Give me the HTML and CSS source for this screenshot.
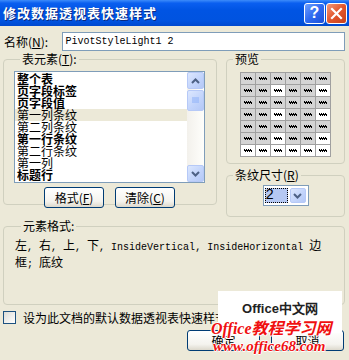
FILE: index.html
```html
<!DOCTYPE html>
<html lang="zh-CN">
<head>
    <meta charset="UTF-8">
    <title>修改数据透视表快速样式</title>
    <link rel="stylesheet" href="styles.css">
</head>
<body>
    <div class="titlebar">
        <span class="title">修改数据透视表快速样式</span>
        <div class="tbtns">
            <span class="tbtn help">?</span>
            <span class="tbtn close">
                <svg width="13" height="13" viewBox="0 0 13 13"><path d="M2 2L11 11M11 2L2 11" stroke="#fff" stroke-width="2.2" stroke-linecap="square"/></svg>
            </span>
        </div>
    </div>

    <div class="content">
        <div class="namerow">
            <label class="namelabel">名称(<u>N</u>):</label>
            <div class="nameinput">PivotStyleLight1 2</div>
        </div>

        <div class="cols">
            <fieldset class="grp elements">
                <legend>表元素(<u>T</u>):</legend>
                <div class="listbox">
                    <ul class="items">
                        <li class="b">整个表</li>
                        <li class="b">页字段标签</li>
                        <li class="b">页字段值</li>
                        <li class="sel">第一列条纹</li>
                        <li>第二列条纹</li>
                        <li class="b">第一行条纹</li>
                        <li>第二行条纹</li>
                        <li>第一列</li>
                        <li class="b">标题行</li>
                    </ul>
                    <div class="vscroll">
                        <span class="sbtn">
                            <svg width="9" height="6" viewBox="0 0 9 6"><path d="M1 5L4.5 1.5L8 5" fill="none" stroke="#4D6185" stroke-width="2"/></svg>
                        </span>
                        <span class="thumb">
                            <svg width="7" height="7" viewBox="0 0 7 7"><path d="M0 1H7M0 3H7M0 5H7" stroke="#8CB0F8" stroke-width="1"/></svg>
                        </span>
                        <span class="track"></span>
                        <span class="sbtn">
                            <svg width="9" height="6" viewBox="0 0 9 6"><path d="M1 1L4.5 4.5L8 1" fill="none" stroke="#4D6185" stroke-width="2"/></svg>
                        </span>
                    </div>
                </div>
                <div class="btnrow">
                    <button class="xpbtn small">格式(<u>F</u>)</button>
                    <button class="xpbtn small">清除(<u>C</u>)</button>
                </div>
            </fieldset>

            <div class="rightcol">
                <fieldset class="grp preview">
                    <legend>预览</legend>
                    <div class="pgrid">
                        <i></i><i></i><i></i><i></i><i></i><i></i>
                        <i></i><i></i><i class="w"></i><i></i><i></i><i class="w"></i>
                        <i></i><i></i><i></i><i></i><i></i><i></i>
                        <i></i><i></i><i class="w"></i><i></i><i></i><i class="w"></i>
                        <i></i><i></i><i></i><i></i><i></i><i></i>
                        <i></i><i></i><i class="w"></i><i></i><i></i><i class="w"></i>
                        <i class="w"></i><i class="w"></i><i class="w"></i><i class="w"></i><i class="w"></i><i class="w"></i>
                    </div>
                </fieldset>

                <fieldset class="grp stripe">
                    <legend>条纹尺寸(<u>R</u>)</legend>
                    <div class="combo">
                        <span class="cval">2</span>
                        <span class="cbtn">
                            <svg width="9" height="6" viewBox="0 0 9 6"><path d="M1 1L4.5 4.5L8 1" fill="none" stroke="#4D6185" stroke-width="2"/></svg>
                        </span>
                    </div>
                </fieldset>
            </div>
        </div>

        <fieldset class="grp format">
            <legend>元素格式:</legend>
            <p class="fmt"><span class="cj">左</span>, <span class="cj">右</span>, <span class="cj">上</span>, <span class="cj">下</span>, InsideVertical, InsideHorizontal <span class="cj">边</span><wbr><span class="cj">框</span>; <span class="cj">底纹</span></p>
        </fieldset>

        <div class="checkrow">
            <span class="chk"></span>
            <span>设为此文档的默认数据透视表快速样式(<u>S</u>)</span>
        </div>

        <div class="okrow">
            <button class="xpbtn wide">确定</button>
            <button class="xpbtn wide">取消</button>
        </div>
    </div>

    <div class="watermark">
        <div class="wm1">Office中文网</div>
        <div class="wm2">Office教程学习网</div>
        <div class="wm3">www.office68.com</div>
    </div>
</body>
</html>
```

FILE: styles.css
```css
body {
    margin: 0;
    width: 349px;
    height: 360px;
    overflow: hidden;
    background: #ECE9D8;
    font-family: "Noto Sans CJK SC", "Liberation Sans", sans-serif;
    font-size: 12px;
    line-height: 12px;
    color: #000;
    position: relative;
}

u { text-decoration: underline; }

/* TITRE */
.titlebar {
    height: 26px;
    display: flex;
    align-items: center;
    justify-content: space-between;
    background: linear-gradient(#3D8CFA 0%, #0A5FF0 12%, #0054E3 40%, #0053E0 80%, #0049CF 100%);
}
.title {
    color: #fff;
    font-weight: bold;
    font-size: 13px;
    padding-left: 3px;
    text-shadow: 1px 1px 0 #0A2A80;
    letter-spacing: 1px;
}
.tbtns {
    display: flex;
    gap: 1px;
    padding-right: 2px;
}
.tbtn {
    width: 19px;
    height: 19px;
    border: 1px solid #fff;
    border-radius: 3px;
    display: flex;
    align-items: center;
    justify-content: center;
    color: #fff;
    font-family: "Liberation Sans", sans-serif;
    font-weight: bold;
    font-size: 16px;
}
.help { background: linear-gradient(135deg, #6FA0FF, #2E6AF0 50%, #1B4FD8); }
.close { background: linear-gradient(135deg, #F39A7C, #E2562C 50%, #C7411D); }

/* CONTENU */
.content {
    padding: 6px 4px 0 3px;
}

.namerow {
    display: flex;
    align-items: center;
}
.namelabel {
    width: 59px;
    padding-left: 1px;
}
.nameinput {
    width: 281px;
    height: 17px;
    border: 1px solid #7F9DB9;
    background: #fff;
    font-family: "Liberation Mono", monospace;
    font-size: 10px;
    line-height: 17px;
    padding-left: 2px;
    box-sizing: content-box;
}

.cols {
    display: flex;
    gap: 9px;
    margin-top: 2px;
}

.grp {
    margin: 0;
    border: 1px solid #D0D0BF;
    border-radius: 4px;
    padding: 0;
    min-width: 0;
}
.grp legend {
    padding: 0 2px;
    line-height: 12px;
    height: 12px;
    margin-left: 6px;
}

/* TABLE ELEMENTS */
.elements {
    width: 212px;
    height: 150px;
    padding: 0 0 0 10px;
}
.listbox {
    margin-top: 6px;
    width: 189px;
    height: 110px;
    border: 1px solid #7F9DB9;
    background: #fff;
    display: flex;
}
.items {
    list-style: none;
    margin: 0;
    padding: 1px 0 0 0;
    flex: 1;
}
.items li {
    height: 12px;
    line-height: 12px;
    padding-left: 2px;
}
.items .b { font-weight: bold; }
.items .sel { background: #ECE9D8; }

.vscroll {
    width: 17px;
    display: flex;
    flex-direction: column;
    background: linear-gradient(90deg, #F3F1EC, #FEFEFB);
}
.sbtn, .thumb, .cbtn {
    border: 1px solid #B6C9F7;
    border-radius: 2px;
    background: linear-gradient(135deg, #DCE7FE, #C1D3FB 60%, #B4C8F6);
    display: flex;
    align-items: center;
    justify-content: center;
    box-sizing: border-box;
}
.sbtn { height: 17px; }
.thumb { height: 21px; margin-top: 1px; }
.track { flex: 1; }

.btnrow {
    display: flex;
    gap: 11px;
    margin-top: 4px;
    padding-left: 30px;
}

.xpbtn {
    height: 21px;
    border: 1px solid #003C74;
    border-radius: 3px;
    background: linear-gradient(#FFFFFF, #F4F3EE 70%, #DCD8CC);
    font-family: "Noto Sans CJK SC", sans-serif;
    font-size: 12px;
    line-height: 12px;
    padding: 0;
    color: #000;
}
.small { width: 60px; }
.wide { width: 73px; }

/* DROITE */
.rightcol {
    display: flex;
    flex-direction: column;
    gap: 5px;
}
.preview {
    width: 119px;
    height: 111px;
    box-sizing: border-box;
    display: flex;
    flex-direction: column;
    align-items: center;
}
.pgrid {
    margin-top: 7px;
    display: grid;
    grid-template-columns: repeat(6, 14px);
    grid-template-rows: repeat(7, 11px);
    gap: 1px;
    padding: 1px;
    background: #A0A0A0;
}
.pgrid i {
    background: #D4D4D4;
    display: flex;
    align-items: center;
    justify-content: center;
}
.pgrid i::after {
    content: "";
    width: 8px;
    height: 3px;
    background:
        linear-gradient(45deg, transparent 35%, #000 35%, #000 65%, transparent 65%) 0 0 / 2px 3px repeat-x,
        linear-gradient(-45deg, transparent 35%, #444 35%, #444 65%, transparent 65%) 1px 0 / 2px 3px repeat-x;
}
.pgrid i.w { background-color: #fff; }

.stripe {
    width: 119px;
    height: 48px;
    box-sizing: border-box;
    display: flex;
    justify-content: center;
}
.combo {
    margin-top: 4px;
    width: 43px;
    height: 19px;
    border: 1px solid #7F9DB9;
    background: #fff;
    display: flex;
    align-items: center;
    gap: 2px;
    padding-left: 1px;
}
.cval {
    width: 22px;
    height: 15px;
    background: #B5C8F2;
    outline: 1px dotted #000;
    outline-offset: -1px;
    font-family: "Liberation Mono", monospace;
    font-size: 14px;
    line-height: 15px;
    padding-left: 1px;
}
.cbtn {
    width: 16px;
    height: 15px;
}

/* FORMAT */
.format {
    margin-top: 3px;
    height: 85px;
    width: 342px;
    box-sizing: border-box;
    padding: 0 20px 0 11px;
}
.fmt {
    margin: 6px 0 0 0;
    line-height: 14px;
    font-family: "Liberation Mono", "Noto Sans CJK SC", monospace;
    font-size: 10px;
}
.fmt .cj {
    display: inline-block;
    height: 14px;
    font-family: "Noto Sans CJK SC", sans-serif;
    font-size: 12px;
    line-height: 14px;
}

.checkrow {
    display: flex;
    align-items: center;
    gap: 7px;
    margin-top: 6px;
}
.chk {
    width: 11px;
    height: 11px;
    border: 1px solid #1C5180;
    background: linear-gradient(135deg, #DCDCD7, #FFFFFF);
}

.okrow {
    display: flex;
    justify-content: flex-end;
    gap: 11px;
    margin-top: 6px;
    padding-right: 1px;
}

/* FILIGRANE */
.watermark {
    position: absolute;
    left: 211px;
    top: 291px;
    width: 134px;
    height: 69px;
}
.wm1 {
    margin-left: 7px;
    width: 124px;
    height: 42px;
    background: #fff;
    color: #222;
    font-family: "Liberation Sans", sans-serif;
    font-weight: bold;
    font-size: 13px;
    text-align: center;
    line-height: 36px;
}
.wm2, .wm3 {
    position: absolute;
    left: 0;
    font-family: "Liberation Serif", "Noto Sans CJK SC", serif;
    font-style: italic;
    font-weight: bold;
    color: #F01010;
    white-space: nowrap;
    text-shadow: 1px 0 0 #fff, -1px 0 0 #fff, 0 1px 0 #fff, 0 -1px 0 #fff;
}
.wm2 {
    top: 32px;
    font-size: 16px;
}
.wm3 {
    top: 49px;
    font-size: 15px;
    left: 2px;
}
```
